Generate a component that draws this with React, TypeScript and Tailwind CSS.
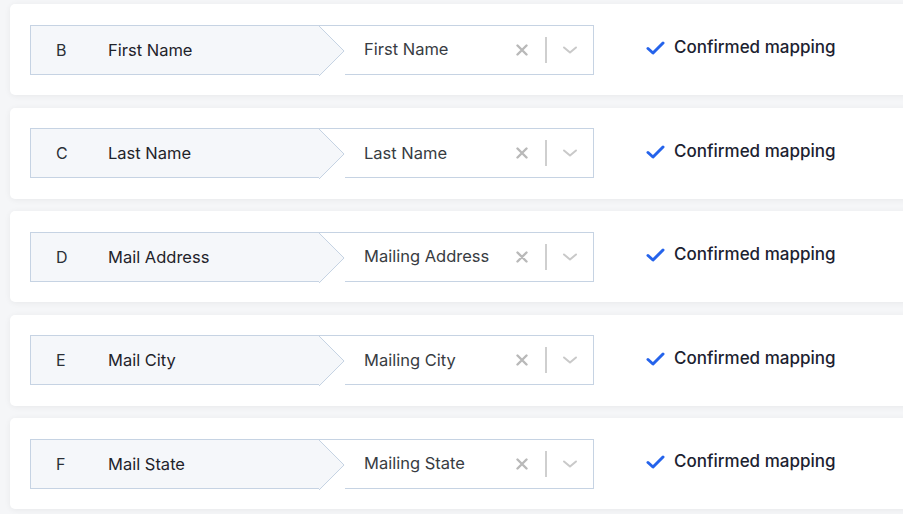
import React from "react";

const rows = [
  { col: "B", source: "First Name", target: "First Name" },
  { col: "C", source: "Last Name", target: "Last Name" },
  { col: "D", source: "Mail Address", target: "Mailing Address" },
  { col: "E", source: "Mail City", target: "Mailing City" },
  { col: "F", source: "Mail State", target: "Mailing State" },
];

function Arrow() {
  return (
    <svg width="26" height="50" viewBox="0 0 26 50" className="block shrink-0 bg-white">
      <polygon points="0,0 0.5,0 25.5,25 0.5,50 0,50" fill="#f5f7fa" />
      <polyline points="0,0 25,25 0,50" fill="none" stroke="#c6d3e3" strokeWidth="1" />
    </svg>
  );
}

function MappingRow({ col, source, target }: { col: string; source: string; target: string }) {
  return (
    <div className="flex h-[91px] w-[920px] items-center rounded-[5px] bg-white pl-[20px] shadow-[0_1px_6px_rgba(0,0,0,0.06)]">
      <div className="flex h-[50px] w-[564px] items-stretch border border-[#c6d3e3]">
        <div className="flex w-[288px] items-center bg-[#f5f7fa] pl-[25px]">
          <span className="w-[52px] text-[16px] text-[#2b2f36]">{col}</span>
          <span className="pt-[1px] text-[16.5px] font-normal text-[#1f232a]">{source}</span>
        </div>
        <Arrow />
        <div className="flex flex-1 items-center bg-white pl-[19px]">
          <span className="flex-1 text-[16.5px] text-[#383c42]">{target}</span>
          <svg width="12" height="12" viewBox="0 0 12 12" className="mr-[17px]">
            <path d="M1.5 1.5 L10.5 10.5 M10.5 1.5 L1.5 10.5" stroke="#b9b9b9" strokeWidth="2.4" strokeLinecap="round" />
          </svg>
          <div className="h-[26px] w-[2px] bg-[#cfcfcf]" />
          <svg width="16" height="10" viewBox="0 0 16 10" className="ml-[15px] mr-[15px]">
            <path d="M2 2.5 L8 7.5 L14 2.5" fill="none" stroke="#c9c9c9" strokeWidth="2" strokeLinecap="round" strokeLinejoin="round" />
          </svg>
        </div>
      </div>
      <div className="ml-[52px] flex items-center pb-[3px]">
        <svg width="19" height="14" viewBox="0 0 19 14" className="mr-[9px]">
          <path d="M2 7.5 L7 12 L17 2" fill="none" stroke="#2563eb" strokeWidth="3" strokeLinecap="round" strokeLinejoin="round" />
        </svg>
        <span className="text-[17px] font-medium text-[#1c2230]">Confirmed mapping</span>
      </div>
    </div>
  );
}

export default function App() {
  return (
    <div
      className="h-[514px] w-[903px] overflow-hidden bg-[#f5f6f8] pl-[10px] pt-[4px]"
      style={{ fontFamily: "Inter, 'Noto Sans', sans-serif" }}
    >
      <div className="flex flex-col gap-[12.5px]">
        {rows.map((r) => (
          <MappingRow key={r.col} {...r} />
        ))}
      </div>
    </div>
  );
}
